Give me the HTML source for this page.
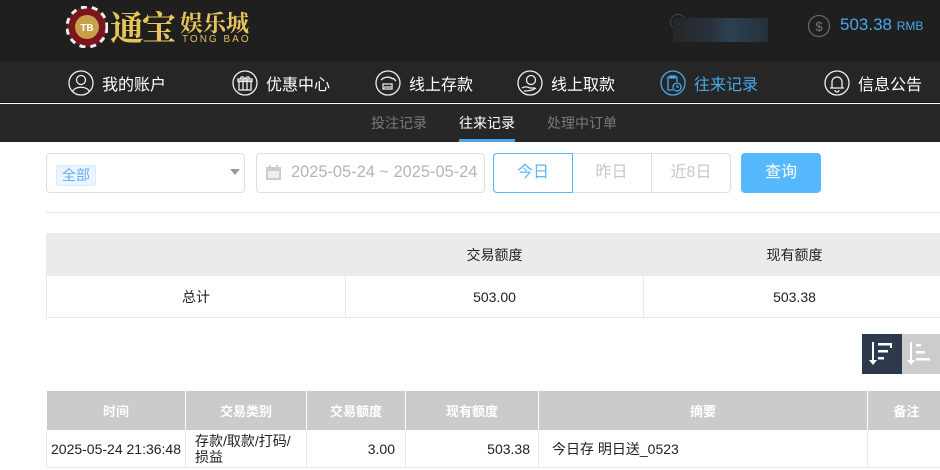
<!DOCTYPE html>
<html><head><meta charset="utf-8"><style>
*{margin:0;padding:0;box-sizing:border-box}
body{width:940px;height:470px;overflow:hidden;background:#fff;font-family:"Liberation Sans","Noto Sans CJK SC",sans-serif;position:relative}
.a{position:absolute}
.hdr{left:0;top:0;width:940px;height:62px;background:#1f1f1f}
.nav{left:0;top:62px;width:940px;height:41px;background:#262626;border-bottom:1px solid #151515}
.sub{left:0;top:104px;width:940px;height:38px;background:#272727}
.ni{position:absolute;top:0;height:41px;display:flex;align-items:center;color:#fff;font-size:16px}
.ni svg{margin-right:8px}
.si{position:absolute;top:0;height:38px;line-height:38px;font-size:14px;color:#7a7a7a}
.box{border:1px solid #dcdfe6;border-radius:4px;background:#fff}
td,th{border:1px solid #e8e8e8;font-size:14px;color:#222}
table{border-collapse:collapse;position:absolute}
</style></head><body>
<div class="a hdr"></div>
<svg class="a" style="left:66px;top:6px" width="42" height="42" viewBox="0 0 42 42">
<circle cx="21" cy="21" r="20" fill="#7a1520"/>
<circle cx="21" cy="21" r="20" fill="none" stroke="#eee" stroke-width="3" stroke-dasharray="6 5"/>
<circle cx="21" cy="21" r="12" fill="#c9a04a"/>
<text x="21" y="25" font-size="10" fill="#fff" text-anchor="middle" font-family="Liberation Sans" font-weight="bold">TB</text>
</svg>
<div class="a" style="left:110px;top:6px;font-size:34px;line-height:40px;color:#e8c55a;font-family:'Noto Serif CJK SC',serif;font-weight:bold;letter-spacing:-2px">通宝</div>
<div class="a" style="left:180px;top:9px;font-size:23px;line-height:26px;color:#e8c55a;font-family:'Noto Serif CJK SC',serif;font-weight:bold">娱乐城</div>
<div class="a" style="left:182px;top:34px;font-size:10px;color:#e0c060;letter-spacing:2px">TONG BAO</div>
<div class="a" style="left:670px;top:14px;width:16px;height:16px;border-radius:50%;border:1px solid #444"></div>
<div class="a" style="left:673px;top:18px;width:95px;height:24px;background:linear-gradient(90deg,#262626,#28323c 40%,#2c4152 60%,#263038)"></div>
<svg class="a" style="left:807px;top:14px" width="24" height="24" viewBox="0 0 24 24"><circle cx="12" cy="12" r="10.5" fill="none" stroke="#666" stroke-width="1.3"/><text x="12" y="17" font-size="13" fill="#777" text-anchor="middle">$</text></svg>
<div class="a" style="left:840px;top:15px;font-size:17px;color:#46a8ea">503.38 <span style="font-size:12px">RMB</span></div>

<div class="a nav">
<div class="ni" style="left:68px"><svg width="26" height="26" viewBox="0 0 26 26" fill="none" stroke="#eee" stroke-width="1.3"><circle cx="13" cy="13" r="12"/><circle cx="13" cy="10" r="4.5"/><path d="M5 21c2-5 14-5 16 0"/></svg>我的账户</div>
<div class="ni" style="left:232px"><svg width="26" height="26" viewBox="0 0 26 26" fill="none" stroke="#eee" stroke-width="1.3"><circle cx="13" cy="13" r="12"/><rect x="7" y="11" width="12" height="9"/><rect x="6" y="9" width="14" height="2.5"/><path d="M11 9v11M15 9v11M13 9c-2-3-5-3-4 0M13 9c2-3 5-3 4 0"/></svg>优惠中心</div>
<div class="ni" style="left:375px"><svg width="26" height="26" viewBox="0 0 26 26" fill="none" stroke="#eee" stroke-width="1.3"><circle cx="13" cy="13" r="12"/><path d="M6 10c3-3 8-4 12-1M8 14h9v5H8zM9 17h7M18 8l3 3"/></svg>线上存款</div>
<div class="ni" style="left:517px"><svg width="26" height="26" viewBox="0 0 26 26" fill="none" stroke="#eee" stroke-width="1.3"><circle cx="13" cy="13" r="12"/><circle cx="14" cy="10" r="4.5"/><path d="M5 18c3-2 6-1 8 0h5M7 21c3 0 8 0 12-3"/></svg>线上取款</div>
<div class="ni" style="left:660px;color:#46a8ea"><svg width="26" height="26" viewBox="0 0 26 26" fill="none" stroke="#46a8ea" stroke-width="1.3"><circle cx="13" cy="13" r="12"/><path d="M13 20H8V7h9v5M10 6h5v2h-5z"/><circle cx="17" cy="17" r="4"/><path d="M17 15v2h2"/></svg>往来记录</div>
<div class="ni" style="left:824px"><svg width="26" height="26" viewBox="0 0 26 26" fill="none" stroke="#eee" stroke-width="1.3"><circle cx="13" cy="13" r="12"/><path d="M8 18V12a5 5 0 0 1 10 0v6zM6 18h14M11 20a2 2 0 0 0 4 0"/></svg>信息公告</div>
</div>

<div class="a sub">
<div class="si" style="left:371px">投注记录</div>
<div class="si" style="left:459px;color:#fff">往来记录</div>
<div class="a" style="left:459px;top:35px;width:56px;height:3px;background:#46a8ea"></div>
<div class="si" style="left:547px">处理中订单</div>
</div>

<div class="a box" style="left:46px;top:153px;width:199px;height:40px"></div>
<div class="a" style="left:56px;top:165px;width:40px;height:21px;background:#ecf5ff;border:1px solid #d9ecff;border-radius:2px;color:#5cb1f7;font-size:14px;line-height:19px;text-align:center">全部</div>
<div class="a" style="left:230px;top:169px;width:0;height:0;border-left:5px solid transparent;border-right:5px solid transparent;border-top:6px solid #999"></div>
<div class="a box" style="left:256px;top:153px;width:229px;height:40px"></div>
<svg class="a" style="left:265px;top:164px" width="17" height="17" viewBox="0 0 17 17"><rect x="1" y="3" width="15" height="13" fill="#ccc"/><rect x="3" y="7" width="11" height="7" fill="#eee"/><rect x="4" y="1" width="2" height="4" fill="#ccc"/><rect x="11" y="1" width="2" height="4" fill="#ccc"/></svg>
<div class="a" style="left:291px;top:163px;font-size:16.4px;color:#b5b5b5">2025-05-24 ~ 2025-05-24</div>
<div class="a box" style="left:493px;top:153px;width:238px;height:40px"></div>
<div class="a" style="left:493px;top:153px;width:80px;height:40px;border:1px solid #56b8fd;border-radius:4px 0 0 4px;color:#56b8fd;font-size:16px;line-height:38px;text-align:center">今日</div>
<div class="a" style="left:572px;top:154px;width:80px;height:38px;border-right:1px solid #dcdfe6;color:#c8c8c8;font-size:16px;line-height:38px;text-align:center">昨日</div>
<div class="a" style="left:652px;top:154px;width:78px;height:38px;color:#c8c8c8;font-size:16px;line-height:38px;text-align:center">近8日</div>
<div class="a" style="left:741px;top:153px;width:80px;height:40px;background:#56b8fd;border-radius:4px;color:#fff;font-size:16px;line-height:40px;text-align:center">查询</div>
<div class="a" style="left:46px;top:212px;width:894px;height:1px;background:#e5e5e5"></div>

<table style="left:46px;top:233px;width:900px">
<tr style="height:42px;background:#ebebeb"><th style="width:299px;border-color:#ebebeb"></th><th style="width:298px;font-weight:normal;border-color:#ebebeb">交易额度</th><th style="font-weight:normal;border-color:#ebebeb">现有额度</th></tr>
<tr style="height:42px;text-align:center"><td>总计</td><td>503.00</td><td>503.38</td></tr>
</table>

<div class="a" style="left:862px;top:334px;width:40px;height:40px;background:#2d3a4e"></div>
<div class="a" style="left:902px;top:334px;width:38px;height:40px;background:#ccc"></div>
<svg class="a" style="left:862px;top:334px" width="78" height="40" viewBox="0 0 78 40" fill="#fff"><rect x="10" y="8" width="2" height="20"/><path d="M7 26h8l-4 5z"/><rect x="16" y="9" width="14" height="2.5"/><rect x="16" y="16" width="10" height="2.5"/><rect x="16" y="23" width="6" height="2.5"/><rect x="28" y="9" width="2" height="5"/>
<rect x="48" y="8" width="2" height="20"/><path d="M45 26h8l-4 5z"/><rect x="54" y="10" width="5" height="2.5"/><rect x="54" y="17" width="9" height="2.5"/><rect x="54" y="24" width="14" height="2.5"/></svg>

<table style="left:46px;top:390px;width:900px">
<tr style="height:40px;background:#cbcbcb;color:#fff">
<th style="width:139px;color:#fff;font-size:13px;border-color:#fff">时间</th><th style="width:121px;color:#fff;font-size:13px;border-color:#fff">交易类别</th><th style="width:99px;color:#fff;font-size:13px;border-color:#fff">交易额度</th><th style="width:133px;color:#fff;font-size:13px;border-color:#fff">现有额度</th><th style="width:329px;color:#fff;font-size:13px;border-color:#fff">摘要</th><th style="color:#fff;font-size:13px;border-color:#fff">备注</th></tr>
<tr style="height:37px;font-size:14px"><td style="text-align:center;font-size:14px">2025-05-24 21:36:48</td><td style="padding-left:9px;line-height:16px">存款/取款/打码/<br>损益</td><td style="text-align:right;padding-right:10px">3.00</td><td style="text-align:right;padding-right:8px">503.38</td><td style="padding-left:13px">今日存 明日送_0523</td><td></td></tr>
</table>
</body></html>
